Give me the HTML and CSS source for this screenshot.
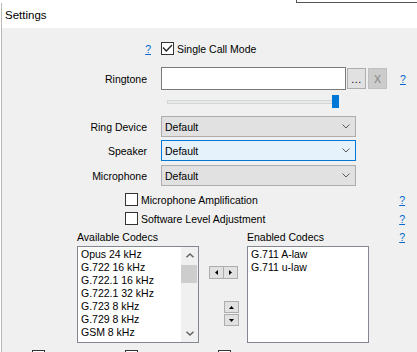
FILE: index.html
```html
<!DOCTYPE html>
<html>
<head>
<meta charset="utf-8">
<title>Settings</title>
<link rel="stylesheet" href="styles.css">
</head>
<body>
<!-- 后面窗口的边角 -->
<div class="topstrip"><div class="behind"></div></div>

<div class="window">
    <div class="titlebar">Settings</div>

    <div class="content">
        <!-- Single Call Mode -->
        <div class="row row-single">
            <div class="lbl lbl-help"><a href="#" class="help">?</a></div>
            <label class="check">
                <span class="box">
                    <svg width="11" height="11" viewBox="0 0 11 11"><polyline points="1,4.5 4.3,8 10,2" fill="none" stroke="#222" stroke-width="1.3"/></svg>
                </span>
                Single Call Mode
            </label>
        </div>

        <!-- 铃声 -->
        <div class="row row-ring">
            <div class="lbl">Ringtone</div>
            <div class="field"></div>
            <div class="btn btn-browse">...</div>
            <div class="btn btn-clear">X</div>
            <a href="#" class="help help-ring">?</a>
        </div>

        <!-- 音量滑块 -->
        <div class="row row-slider">
            <div class="slider">
                <div class="track"></div>
                <div class="thumb"></div>
            </div>
        </div>

        <!-- 设备选择 -->
        <div class="row row-sel1">
            <div class="lbl">Ring Device</div>
            <div class="select">
                <span>Default</span>
                <svg width="8" height="5" viewBox="0 0 8 5"><polyline points="0.5,0.5 4,4 7.5,0.5" fill="none" stroke="#5a5a5a" stroke-width="1"/></svg>
            </div>
        </div>
        <div class="row row-sel2">
            <div class="lbl">Speaker</div>
            <div class="select focus">
                <span>Default</span>
                <svg width="8" height="5" viewBox="0 0 8 5"><polyline points="0.5,0.5 4,4 7.5,0.5" fill="none" stroke="#5a5a5a" stroke-width="1"/></svg>
            </div>
        </div>
        <div class="row row-sel3">
            <div class="lbl">Microphone</div>
            <div class="select">
                <span>Default</span>
                <svg width="8" height="5" viewBox="0 0 8 5"><polyline points="0.5,0.5 4,4 7.5,0.5" fill="none" stroke="#5a5a5a" stroke-width="1"/></svg>
            </div>
        </div>

        <!-- 选项 -->
        <div class="row row-opt opt1">
            <label class="check"><span class="box"></span>Microphone Amplification</label>
            <a href="#" class="help push">?</a>
        </div>
        <div class="row row-opt opt2">
            <label class="check"><span class="box"></span>Software Level Adjustment</label>
            <a href="#" class="help push">?</a>
        </div>

        <!-- 编解码器 -->
        <div class="codecs">
            <div class="cap">Available Codecs</div>
            <div></div>
            <div class="cap">Enabled Codecs</div>
            <div class="cap cap-help"><a href="#" class="help">?</a></div>

            <div class="list">
                <div class="items">
                    <div>Opus 24 kHz</div>
                    <div>G.722 16 kHz</div>
                    <div>G.722.1 16 kHz</div>
                    <div>G.722.1 32 kHz</div>
                    <div>G.723 8 kHz</div>
                    <div>G.729 8 kHz</div>
                    <div>GSM 8 kHz</div>
                </div>
                <div class="scrollbar">
                    <div class="sb-btn">
                        <svg width="8" height="5" viewBox="0 0 8 5"><polyline points="0.5,4.3 4,1 7.5,4.3" fill="none" stroke="#606060" stroke-width="1.4"/></svg>
                    </div>
                    <div class="sb-thumb"></div>
                    <div class="sb-space"></div>
                    <div class="sb-btn">
                        <svg width="8" height="5" viewBox="0 0 8 5"><polyline points="0.5,0.7 4,4 7.5,0.7" fill="none" stroke="#606060" stroke-width="1.4"/></svg>
                    </div>
                </div>
            </div>

            <div class="mover">
                <div class="lr">
                    <div class="abtn"><svg width="3" height="5" viewBox="0 0 3 5"><polygon points="3,0 0,2.5 3,5" fill="#000"/></svg></div>
                    <div class="abtn"><svg width="3" height="5" viewBox="0 0 3 5"><polygon points="0,0 3,2.5 0,5" fill="#000"/></svg></div>
                </div>
                <div class="ud">
                    <div class="abtn"><svg width="5" height="3" viewBox="0 0 5 3"><polygon points="0,3 2.5,0 5,3" fill="#000"/></svg></div>
                    <div class="abtn"><svg width="5" height="3" viewBox="0 0 5 3"><polygon points="0,0 2.5,3 5,0" fill="#000"/></svg></div>
                </div>
            </div>

            <div class="list">
                <div class="items">
                    <div>G.711 A-law</div>
                    <div>G.711 u-law</div>
                </div>
            </div>
            <div></div>
        </div>

        <!-- 下面被截断的复选框 -->
        <div class="row row-bottom">
            <span class="box"></span>
            <span class="box"></span>
            <span class="box"></span>
        </div>
    </div>
</div>
</body>
</html>
```

FILE: styles.css
```css
*{
    margin: 0;
    padding: 0;
    box-sizing: border-box;
}
body{
    width: 417px;
    height: 352px;
    overflow: hidden;
    background-color: #fff;
    font-family: "Liberation Sans", Arial, sans-serif;
    font-size: 10.5px;
    color: #000;
}
/* 顶部 */
.topstrip{
    height: 3px;
}
.behind{
    margin-left: 296px;
    height: 3px;
    border-left: 1px solid #555;
    border-bottom: 1px solid #555;
}
.window{
    margin-left: 1px;
    height: 349px;
    border-left: 1px solid #b9b9b9;
    background-color: #f0f0f0;
    overflow: hidden;
}
.titlebar{
    height: 25px;
    line-height: 25px;
    padding-left: 3px;
    background-color: #fff;
    font-size: 11.5px;
}
.content{
    padding-top: 14px;
}
/* 行 */
.row{
    display: flex;
    align-items: center;
}
.lbl{
    flex: none;
    width: 145px;
    margin-right: 14px;
    text-align: right;
}
.lbl-help{
    width: 149px;
    margin-right: 10px;
}
.help{
    color: #0066cc;
    text-decoration: underline;
}
.check{
    display: flex;
    align-items: center;
    gap: 3px;
}
.box{
    flex: none;
    display: flex;
    width: 13px;
    height: 13px;
    border: 1px solid #333;
    background-color: #fff;
}
.row-single{
    height: 13px;
}
/* 铃声 */
.row-ring{
    height: 23px;
    margin-top: 12px;
}
.field{
    width: 185px;
    height: 23px;
    border: 1px solid #7a7a7a;
    background-color: #fff;
}
.btn{
    width: 19px;
    height: 21px;
    display: flex;
    justify-content: center;
}
.btn-browse{
    margin-left: 1px;
    border: 1px solid #adadad;
    background-color: #e1e1e1;
    align-items: flex-end;
    padding-bottom: 4px;
    letter-spacing: 0.5px;
    line-height: 10px;
}
.btn-clear{
    margin-left: 2px;
    border: 1px solid #bfbfbf;
    background-color: #cccccc;
    color: #838383;
    align-items: center;
}
.help-ring{
    margin-left: 13px;
}
/* 滑块 */
.row-slider{
    height: 13px;
    margin-top: 5px;
    padding-left: 165px;
}
.slider{
    position: relative;
    width: 172px;
    height: 13px;
}
.track{
    margin-top: 5px;
    height: 4px;
    border: 1px solid #d6d6d6;
    background-color: #e7eaea;
}
.thumb{
    position: absolute;
    right: 0;
    top: 0;
    width: 7px;
    height: 13px;
    background-color: #0078d7;
}
/* 下拉框 */
.select{
    width: 195px;
    height: 21px;
    display: flex;
    align-items: center;
    justify-content: space-between;
    padding: 0 5px 0 3px;
    border: 1px solid #adadad;
    background-color: #e1e1e1;
}
.select.focus{
    border-color: #0078d7;
    background-color: #e5f1fb;
}
.row-sel1{
    margin-top: 8px;
}
.row-sel2{
    margin-top: 3px;
}
.row-sel3{
    margin-top: 4px;
}
/* 复选项 */
.row-opt{
    width: 403px;
    height: 13px;
    padding-left: 123px;
}
.opt1{
    margin-top: 7px;
}
.opt2{
    margin-top: 6px;
}
.push{
    margin-left: auto;
}
/* 编解码器 */
.codecs{
    display: grid;
    grid-template-columns: 122px 48px 122px 1fr;
    grid-template-rows: 13px 97px;
    row-gap: 2px;
    width: 328px;
    margin: 6px 0 0 75px;
}
.cap{
    line-height: 13px;
}
.cap-help{
    text-align: right;
}
.list{
    display: flex;
    border: 1px solid #828790;
    background-color: #fff;
}
.items{
    flex: 1;
    padding: 1px 0 0 3px;
    line-height: 13px;
    overflow: hidden;
}
.scrollbar{
    width: 17px;
    display: flex;
    flex-direction: column;
    background-color: #f0f0f0;
}
.sb-btn{
    height: 17px;
    display: flex;
    align-items: center;
    justify-content: center;
}
.sb-thumb{
    height: 18px;
    margin: 1px 1px 0 0;
    background-color: #cdcdcd;
}
.sb-space{
    flex: 1;
}
.mover{
    display: flex;
    flex-direction: column;
}
.abtn{
    width: 15px;
    height: 13px;
    display: flex;
    align-items: center;
    justify-content: center;
    border: 1px solid #adadad;
    background-color: #e1e1e1;
}
.lr{
    display: flex;
    margin: 20px 0 0 10px;
}
.lr .abtn + .abtn{
    margin-left: -1px;
}
.ud{
    display: flex;
    flex-direction: column;
    gap: 1px;
    margin: 22px 0 0 25px;
}
.ud .abtn{
    height: 12px;
}
/* 底部 */
.row-bottom{
    margin-top: 7px;
    padding-left: 30px;
    gap: 80px;
    align-items: flex-start;
}
```
